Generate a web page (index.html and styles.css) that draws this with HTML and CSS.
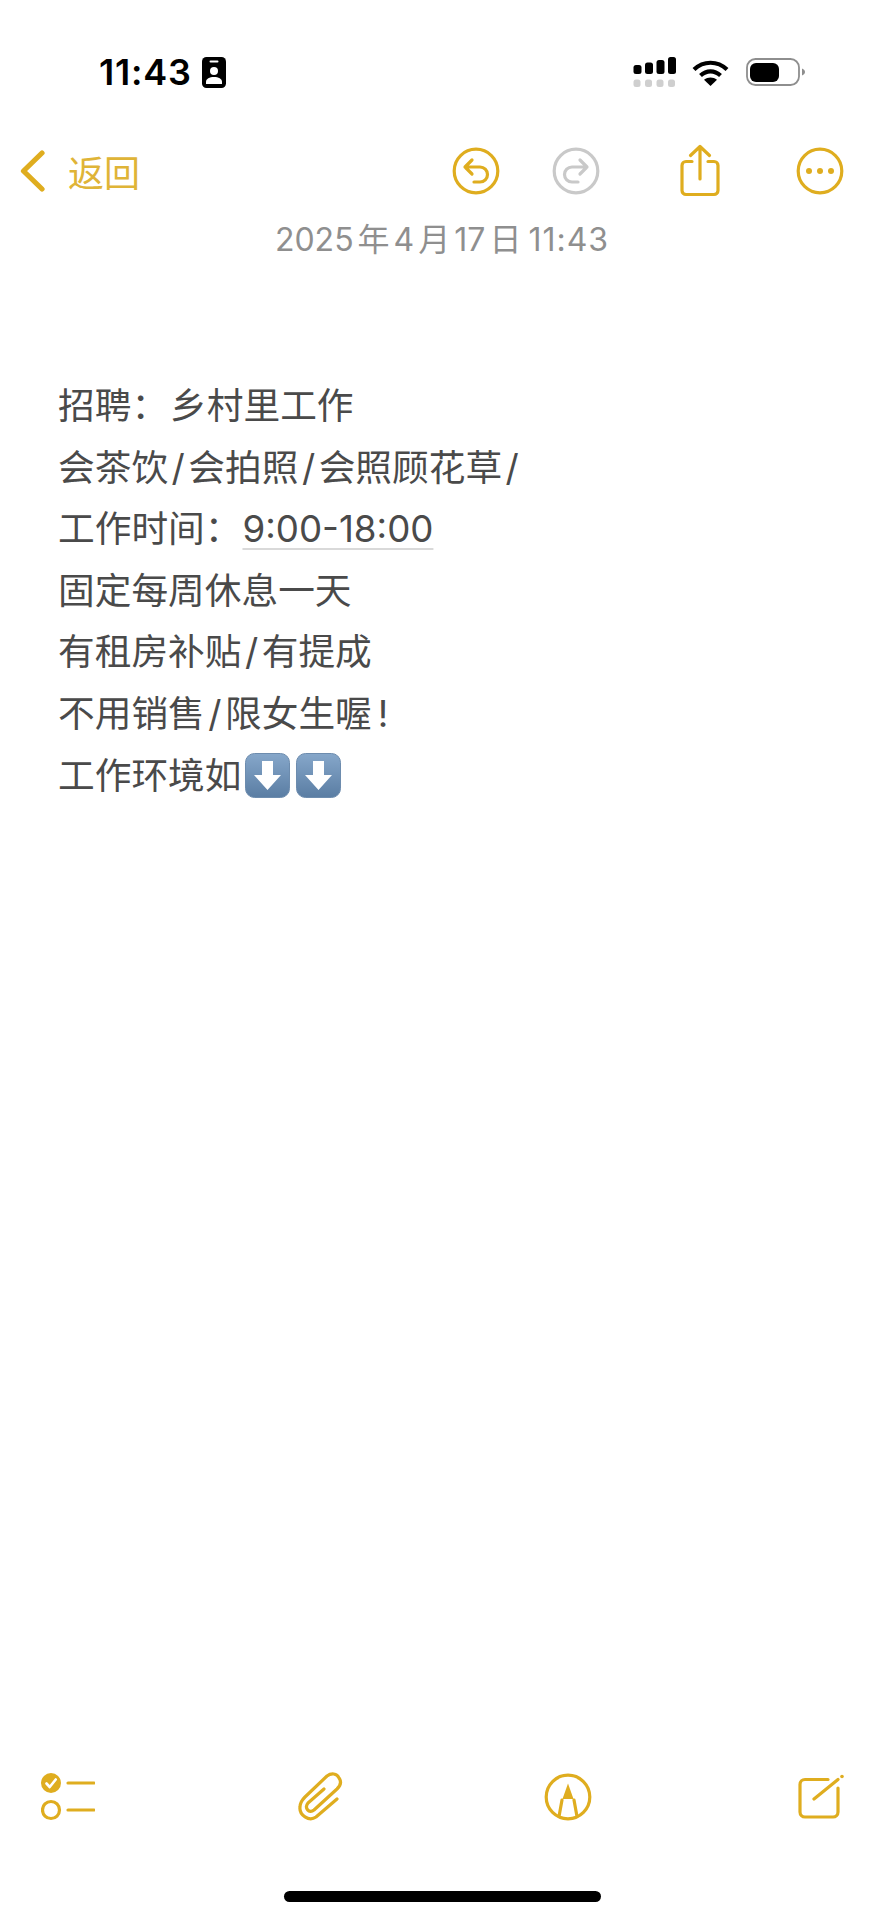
FILE: index.html
```html
<!DOCTYPE html>
<html lang="zh-CN">
<head>
  <meta charset="UTF-8">
  <meta name="viewport" content="width=device-width, initial-scale=1.0">
  <title>备忘录</title>
  <link rel="stylesheet" href="styles.css">
</head>
<body>
  <div class="page">
    <!-- Status bar -->
    <header class="status-bar">
      <span class="clock">11:43</span>
      <svg class="id-badge" viewBox="0 0 24 31">
        <rect width="24" height="31" rx="4.5" fill="#000"/>
        <rect x="7.5" y="3.5" width="9" height="2" rx="1" fill="#fff"/>
        <circle cx="12" cy="14" r="4" fill="#fff"/>
        <path d="M4 27v-2c0-3.500 3.500-5 8-5s8 1.500 8 5v2z" fill="#fff"/>
      </svg>
      <div class="status-right">
        <svg class="signal" viewBox="0 0 44 31">
          <rect x="0.500" y="8" width="8" height="9" rx="2.500"/>
          <rect x="12" y="5.500" width="8" height="11.500" rx="2.500"/>
          <rect x="23.500" y="3" width="8" height="14" rx="2.500"/>
          <rect x="35" y="0" width="8" height="17" rx="2.500"/>
          <g fill="#cfcfcf">
            <rect x="0.500" y="22.500" width="7" height="7.500" rx="2.500"/>
            <rect x="12" y="22.500" width="7" height="7.500" rx="2.500"/>
            <rect x="23.500" y="22.500" width="7" height="7.500" rx="2.500"/>
            <rect x="35" y="22.500" width="7" height="7.500" rx="2.500"/>
          </g>
        </svg>
        <svg class="wifi" viewBox="0 0 37 27">
          <path d="M2 10.500C11.500 1.500 25.500 1.500 35 10.500" fill="none" stroke="#000" stroke-width="4.200"/>
          <path d="M8.500 16.500C14.500 11 22.500 11 28.500 16.500" fill="none" stroke="#000" stroke-width="4.200"/>
          <path d="M18.500 27L12 20.800C16 17.600 21 17.600 25 20.800z" fill="#000"/>
        </svg>
        <svg class="battery" viewBox="0 0 60 28">
          <rect x="1" y="1" width="52" height="26" rx="8.500" fill="#fff" stroke="#8e8e8e" stroke-width="1.800"/>
          <rect x="4" y="5" width="29" height="19" rx="6" fill="#000"/>
          <path d="M56 10.500c2 .8 3 2 3 3.500s-1 2.700-3 3.500z" fill="#8e8e8e"/>
        </svg>
      </div>
    </header>

    <!-- Navigation -->
    <nav class="nav-bar">
      <svg class="chevron" viewBox="0 0 25 42">
        <path d="M22 3L3.500 21 22 39" fill="none" stroke="#dfad1f" stroke-width="5.200" stroke-linecap="round" stroke-linejoin="round"/>
      </svg>
      <span class="back-label">返回</span>
      <div class="nav-actions">
        <svg class="icon" viewBox="0 0 48 48">
          <circle cx="24" cy="24" r="21.800"/>
          <path d="M13 20H28a7.500 7.500 0 0 1 0 15H22M20 13l-7 7 7 7"/>
        </svg>
        <svg class="icon icon-off" viewBox="0 0 48 48">
          <circle cx="24" cy="24" r="21.800"/>
          <path d="M35 20H20a7.500 7.500 0 0 0 0 15H26M28 13l7 7-7 7"/>
        </svg>
        <svg class="icon icon-share" viewBox="0 0 48 54">
          <path d="M16 17.500H10a4 4 0 0 0-4 4V46.500a4 4 0 0 0 4 4H38a4 4 0 0 0 4-4V21.500a4 4 0 0 0-4-4H32"/>
          <path d="M24 3V35M14.500 11.500L24 2.500l9.500 9"/>
        </svg>
        <svg class="icon" viewBox="0 0 48 48">
          <circle cx="24" cy="24" r="21.800"/>
          <circle class="dot" cx="13" cy="24" r="3"/>
          <circle class="dot" cx="24" cy="24" r="3"/>
          <circle class="dot" cx="35" cy="24" r="3"/>
        </svg>
      </div>
    </nav>

    <div class="note-date">2025 年 4 月 17 日 <span class="date-time">11:43</span></div>

    <!-- Note body -->
    <main class="note">
      <p>招聘：<span class="after-colon">乡村里工作</span></p>
      <p>会茶饮<span class="slash">/</span>会拍照<span class="slash">/</span>会照顾花草<span class="slash">/</span></p>
      <p>工作时间：<span class="detected">9:00-18:00</span></p>
      <p>固定每周休息一天</p>
      <p>有租房补贴<span class="slash">/</span>有提成</p>
      <p>不用销售<span class="slash">/</span>限女生喔<span class="bang">!</span></p>
      <p class="emoji-line">工作环境如
        <svg class="arrow-key" viewBox="0 0 45 45">
          <defs>
            <linearGradient id="keyFill" x1="0" y1="0" x2="0" y2="1">
              <stop offset="0" stop-color="#86a7ca"/>
              <stop offset="1" stop-color="#5a7da3"/>
            </linearGradient>
          </defs>
          <rect x="0.500" y="0.500" width="44" height="44" rx="9" fill="url(#keyFill)" stroke="#6d8cae"/>
          <path d="M17 8H28V22H36L22.500 37 9 22H17z" fill="#fff"/>
        </svg>
        <svg class="arrow-key" viewBox="0 0 45 45">
          <rect x="0.500" y="0.500" width="44" height="44" rx="9" fill="url(#keyFill)" stroke="#6d8cae"/>
          <path d="M17 8H28V22H36L22.500 37 9 22H17z" fill="#fff"/>
        </svg>
      </p>
    </main>

    <!-- Bottom toolbar -->
    <footer class="toolbar">
      <svg class="icon tool-list" viewBox="0 0 54 48">
        <circle class="dot" cx="10" cy="10" r="10"/>
        <path class="tick" d="M5.500 10.500l3.200 3.500 6-7.500"/>
        <circle cx="10" cy="37" r="8.500"/>
        <path d="M27 10H53M27 37H53"/>
      </svg>
      <svg class="icon tool-clip" viewBox="0 0 46 50">
        <path d="M40 27L19 45C12 50 2 43 3 35C3 31 5 28 8 25L30 4C34 1 40 1 42 6C45 10 43 14 40 17L17 38C12 42 7 36 11 31L27 17"/>
      </svg>
      <svg class="icon" viewBox="0 0 48 48">
        <circle cx="24" cy="24" r="21.800"/>
        <path class="dot" d="M24 10.500L29.500 26H18.500z"/>
        <path d="M18 27L15 43.500M30 27L33 43.500"/>
      </svg>
      <svg class="icon tool-compose" viewBox="0 0 46 46">
        <path d="M30 5.500H7a5 5 0 0 0-5 5V38a5 5 0 0 0 5 5H35a5 5 0 0 0 5-5V14"/>
        <path d="M16 25L40 5.500"/>
        <circle class="dot" cx="44" cy="2.500" r="1.800"/>
      </svg>
    </footer>
    <div class="home-bar"></div>
  </div>
</body>
</html>
```

FILE: styles.css
```css
body {
  margin: 0;
  padding: 0;
  background-color: #fff;
  font-family: Inter, "Noto Sans CJK SC", sans-serif;
}
.page {
  height: 1920px;
  display: flex;
  flex-direction: column;
  overflow: hidden;
}

/* Status bar */
.status-bar {
  display: flex;
  align-items: center;
  height: 32px;
  margin-top: 56px;
  padding: 0 84px 0 99px;
}
.clock {
  font-size: 36px;
  font-weight: 600;
  letter-spacing: 0.800px;
  color: #000;
}
.id-badge {
  width: 24px;
  height: 31px;
  margin-left: 10px;
}
.status-right {
  display: flex;
  align-items: center;
  margin-left: auto;
}
.signal {
  width: 44px;
  height: 31px;
}
.wifi {
  width: 37px;
  height: 27px;
  margin-left: 15px;
}
.battery {
  width: 60px;
  height: 28px;
  margin-left: 17px;
  margin-right: -6px;
}

/* Nav */
.nav-bar {
  display: flex;
  align-items: center;
  height: 52px;
  margin-top: 57px;
  padding: 0 40px 0 20px;
}
.chevron {
  width: 25px;
  height: 42px;
}
.back-label {
  margin-left: 23px;
  font-size: 36px;
  color: #dfb437;
}
.nav-actions {
  display: flex;
  align-items: center;
  margin-left: auto;
}
.icon {
  width: 48px;
  height: 48px;
  fill: none;
  stroke: #dfad1f;
  stroke-width: 3.200;
  stroke-linecap: round;
  stroke-linejoin: round;
  flex-shrink: 0;
}
.icon .dot {
  fill: #dfad1f;
  stroke: none;
}
.icon-off {
  stroke: #c9c9c9;
  margin-left: 52px;
}
.icon-share {
  height: 54px;
  margin-left: 76px;
}
.icon-share + .icon {
  margin-left: 72px;
}
.note-date {
  margin-top: 21px;
  font-size: 32px;
  line-height: 44px;
  text-align: center;
  color: #8f8f8f;
  word-spacing: -5px;
}
.date-time {
  padding-left: 3px;
  letter-spacing: 1px;
}

/* Note text */
.note {
  margin-top: 113px;
  padding-left: 58px;
  font-size: 36.700px;
  line-height: 61.600px;
  color: #4a4a4a;
}
.note p {
  margin: 0;
}
.after-colon {
  padding-left: 2px;
}
.slash {
  padding: 0 3.500px;
}
.bang {
  padding-left: 6px;
}
.detected {
  padding-left: 1px;
  text-decoration: underline 2px #d9d9d9;
  text-decoration-skip-ink: none;
  text-underline-offset: 6px;
}
.emoji-line {
  display: flex;
  align-items: center;
  column-gap: 6px;
}
.arrow-key {
  width: 45px;
  height: 45px;
}
.arrow-key:first-of-type {
  margin-left: -2px;
}

/* Bottom toolbar */
.toolbar {
  display: flex;
  align-items: center;
  justify-content: space-between;
  height: 52px;
  margin-top: auto;
  padding: 0 40px 0 41px;
}
.tool-list {
  width: 54px;
}
.tool-clip {
  width: 46px;
  height: 50px;
}
.tool-compose {
  width: 46px;
  height: 46px;
  margin-left: 4px;
}
.tick {
  stroke: #fff;
  stroke-width: 2.600;
}
.home-bar {
  width: 317px;
  height: 11px;
  margin: 68px auto 18px;
  background-color: #000;
  border-radius: 6px;
}
```
